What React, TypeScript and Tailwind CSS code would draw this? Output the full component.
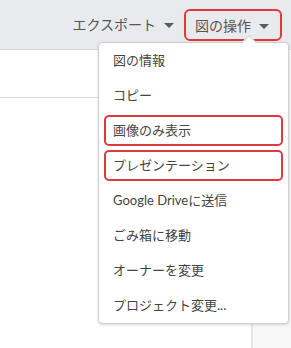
const items = [
  { label: "図の情報" },
  { label: "コピー" },
  { label: "画像のみ表示", marked: true },
  { label: "プレゼンテーション", marked: true },
  { label: "Google Driveに送信" },
  { label: "ごみ箱に移動" },
  { label: "オーナーを変更" },
  { label: "プロジェクト変更..." },
];

function Caret() {
  return <span className="inline-block w-0 h-0 border-x-[5px] border-x-transparent border-t-[5px] border-t-[#5a5a5a] ml-[8px] mt-[2px]" />;
}

export default function App() {
  return (
    <div
      className="relative w-[291px] h-[348px] overflow-hidden bg-white text-[#444]"
      style={{ fontFamily: '"Lato", "Noto Sans CJK JP", sans-serif' }}
    >
      {/* Toolbar */}
      <header className="h-[50px] bg-[#e9eaed] border-b border-[#d8d9dc] flex items-center justify-end pr-[9px]">
        <button className="flex items-center text-[14px] text-[#555] mr-[10px]">
          エクスポート
          <Caret />
        </button>
        <button className="flex items-center h-[32px] w-[98px] pl-[9px] border-2 border-[#e0393b] rounded-[6px] text-[14px] text-[#555] mt-[1px]">
          図の操作
          <Caret />
        </button>
      </header>

      {/* Page body */}
      <div className="flex h-[298px]">
        <div className="flex-1">
          <div className="h-[48px] border-b border-[#dedede]" />
        </div>
        <div className="w-[40px] border-l-2 border-[#e4e4e4] bg-[#f8f8f8]" />
      </div>

      {/* Dropdown menu */}
      <div className="absolute left-[98px] top-[42px] w-[191px] bg-white border border-[#cfcfcf] rounded-[4px] shadow-[0_1px_3px_rgba(0,0,0,0.15)]">
        <div className="absolute left-[145px] top-[-6px] w-[10px] h-[10px] bg-white border-l border-t border-[#cfcfcf] rotate-45" />
        <ul className="relative">
          {items.map((it) => (
            <li key={it.label} className="h-[35px] flex items-center">
              <div
                className={`mx-[5px] w-full h-[31px] flex items-center pl-[7px] rounded-[5px] border-2 text-[13px] ${
                  it.marked ? "border-[#e0393b]" : "border-transparent"
                }`}
              >
                {it.label}
              </div>
            </li>
          ))}
        </ul>
      </div>
    </div>
  );
}
